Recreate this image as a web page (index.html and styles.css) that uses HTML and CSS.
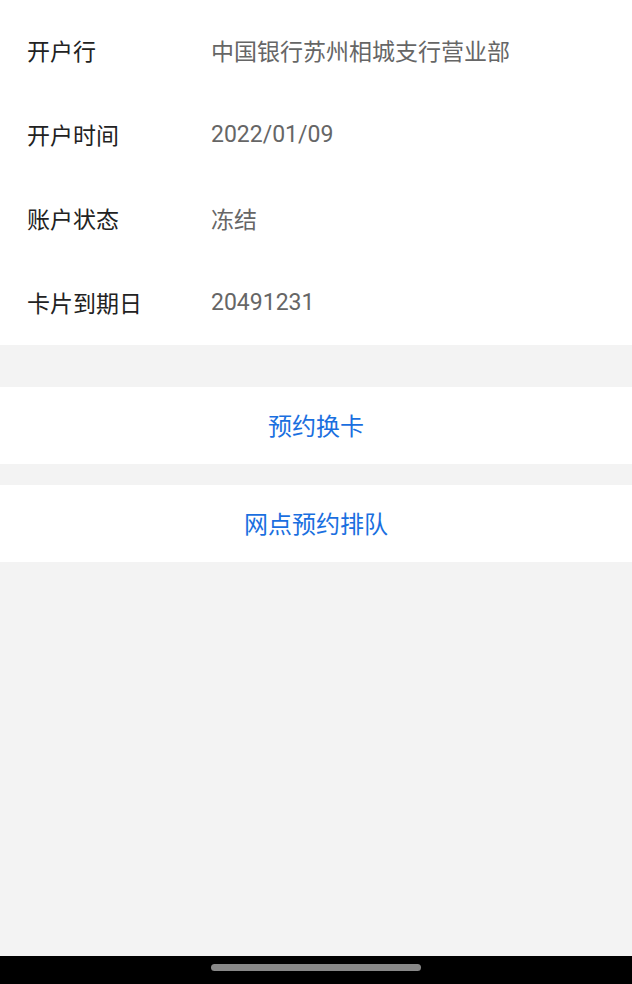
FILE: index.html
```html
<!DOCTYPE HTML>
<html>
<head>
<meta charset="utf-8">
<title>账户信息</title>
<link rel="stylesheet" href="styles.css">
</head>

<body>
<div class="page">
	<ul class="info">
		<li><span class="label">开户行</span><span class="value">中国银行苏州相城支行营业部</span></li>
		<li><span class="label">开户时间</span><span class="value">2022/01/09</span></li>
		<li><span class="label">账户状态</span><span class="value">冻结</span></li>
		<li><span class="label">卡片到期日</span><span class="value">20491231</span></li>
	</ul>
	<div class="actions">
		<a class="btn" href="#">预约换卡</a>
		<a class="btn" href="#">网点预约排队</a>
	</div>
</div>
<div class="navbar"><span class="home"></span></div>
</body>
</html>
```

FILE: styles.css
```css
html, body { margin:0; padding:0; height:100%;}
body { font-family:Roboto, "Noto Sans CJK SC", "Noto Sans", sans-serif; background:#f3f3f3; display:flex; flex-direction:column;}
.page { flex:1;}
ul, li { list-style:none; margin:0; padding:0;}
.info { background:#fff; padding:9px 0 0;}
.info li { display:flex; align-items:center; height:84px; padding:0 27px 2px; box-sizing:border-box; font-size:23px;}
.label { width:184px; color:#222;}
.value { color:#666;}
.actions { padding-top:42px; display:flex; flex-direction:column; gap:21px;}
.btn { display:flex; align-items:center; justify-content:center; height:77px; padding-bottom:3px; box-sizing:border-box; background:#fff; color:#1a6fe0; font-size:24px; text-decoration:none;}
.navbar { height:28px; background:#000; display:flex; justify-content:center; padding-top:8px; box-sizing:border-box;}
.home { width:210px; height:7px; border-radius:4px; background:#888;}
```
